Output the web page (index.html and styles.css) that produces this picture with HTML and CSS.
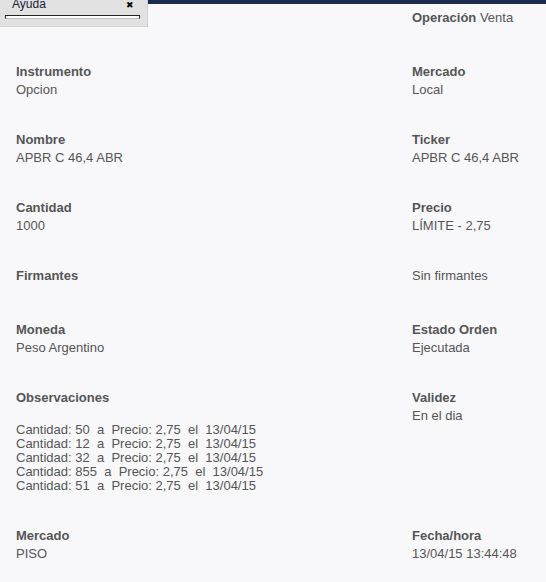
FILE: index.html
```html
<!DOCTYPE html>
<html lang="es">
<head>
    <meta charset="UTF-8">
    <title>Detalle de orden</title>
    <link rel="stylesheet" href="styles.css">
</head>
<body>
    <div class="topbar">
        <div class="ayuda">
            <div class="ayuda-head">
                <span class="ayuda-titulo">Ayuda</span>
                <span class="ayuda-cerrar">&#10006;</span>
            </div>
            <div class="ayuda-campo"></div>
        </div>
        <div class="franja"></div>
    </div>

    <div class="detalle">
        <div class="fila fila-op">
            <div class="celda"></div>
            <div class="celda"><b>Operación</b> Venta</div>
        </div>

        <div class="fila">
            <div class="celda"><div class="label">Instrumento</div><div class="valor">Opcion</div></div>
            <div class="celda"><div class="label">Mercado</div><div class="valor">Local</div></div>
        </div>

        <div class="fila">
            <div class="celda"><div class="label">Nombre</div><div class="valor">APBR C 46,4 ABR</div></div>
            <div class="celda"><div class="label">Ticker</div><div class="valor">APBR C 46,4 ABR</div></div>
        </div>

        <div class="fila">
            <div class="celda"><div class="label">Cantidad</div><div class="valor">1000</div></div>
            <div class="celda"><div class="label">Precio</div><div class="valor">LÍMITE - 2,75</div></div>
        </div>

        <div class="fila fila-corta">
            <div class="celda"><div class="label">Firmantes</div></div>
            <div class="celda"><div class="valor">Sin firmantes</div></div>
        </div>

        <div class="fila">
            <div class="celda"><div class="label">Moneda</div><div class="valor">Peso Argentino</div></div>
            <div class="celda"><div class="label">Estado Orden</div><div class="valor">Ejecutada</div></div>
        </div>

        <div class="fila fila-obs">
            <div class="celda">
                <div class="label">Observaciones</div>
                <div class="obs">
                    <div>Cantidad: 50&nbsp; a&nbsp; Precio: 2,75&nbsp; el&nbsp; 13/04/15</div>
                    <div>Cantidad: 12&nbsp; a&nbsp; Precio: 2,75&nbsp; el&nbsp; 13/04/15</div>
                    <div>Cantidad: 32&nbsp; a&nbsp; Precio: 2,75&nbsp; el&nbsp; 13/04/15</div>
                    <div>Cantidad: 855&nbsp; a&nbsp; Precio: 2,75&nbsp; el&nbsp; 13/04/15</div>
                    <div>Cantidad: 51&nbsp; a&nbsp; Precio: 2,75&nbsp; el&nbsp; 13/04/15</div>
                </div>
            </div>
            <div class="celda"><div class="label">Validez</div><div class="valor">En el dia</div></div>
        </div>

        <div class="fila">
            <div class="celda"><div class="label">Mercado</div><div class="valor">PISO</div></div>
            <div class="celda"><div class="label">Fecha/hora</div><div class="valor">13/04/15 13:44:48</div></div>
        </div>
    </div>
</body>
</html>
```

FILE: styles.css
```css
* {
  margin: 0;
  padding: 0;
  box-sizing: border-box;
}

body {
  background: #f8f8fb;
  font-family: 'Liberation Sans', Arial, sans-serif;
  font-size: 13px;
  color: #555555;
  width: 546px;
  height: 582px;
  overflow: hidden;
}

.topbar {
  display: flex;
  height: 0;
}

.ayuda {
  width: 148px;
  height: 27px;
  background: #e1e1e1;
  border-right: 1px solid #cfcfcf;
  border-bottom: 1px solid #d4d4d4;
  flex-shrink: 0;
  position: relative;
  z-index: 2;
}

.ayuda-head {
  display: flex;
  justify-content: space-between;
  align-items: center;
  height: 12px;
  padding: 0 13px 0 12px;
  margin-top: -2px;
}

.ayuda-titulo {
  font-size: 12px;
  color: #1b2136;
}

.ayuda-cerrar {
  font-size: 9px;
  color: #000;
  margin-top: 1px;
}

.ayuda-campo {
  margin: 5px 7px 0 5px;
  height: 4px;
  background: #fff;
  border: 1px solid #222;
  border-bottom: 1px solid #bdbdbd;
}

.franja {
  flex: 1;
  height: 4px;
  background: #1b2a4d;
}

.detalle {
  padding: 9px 0 0 16px;
}

.fila {
  display: flex;
  margin-bottom: 32px;
  line-height: 18px;
}

.celda {
  width: 396px;
}

.celda + .celda {
  width: auto;
}

.fila-op {
  margin-bottom: 36px;
}

.fila-corta {
  margin-bottom: 36px;
}

.label {
  font-weight: bold;
}

.obs {
  margin-top: 16px;
  line-height: 14px;
}

.fila-obs {
  margin-bottom: 34px;
}
```
